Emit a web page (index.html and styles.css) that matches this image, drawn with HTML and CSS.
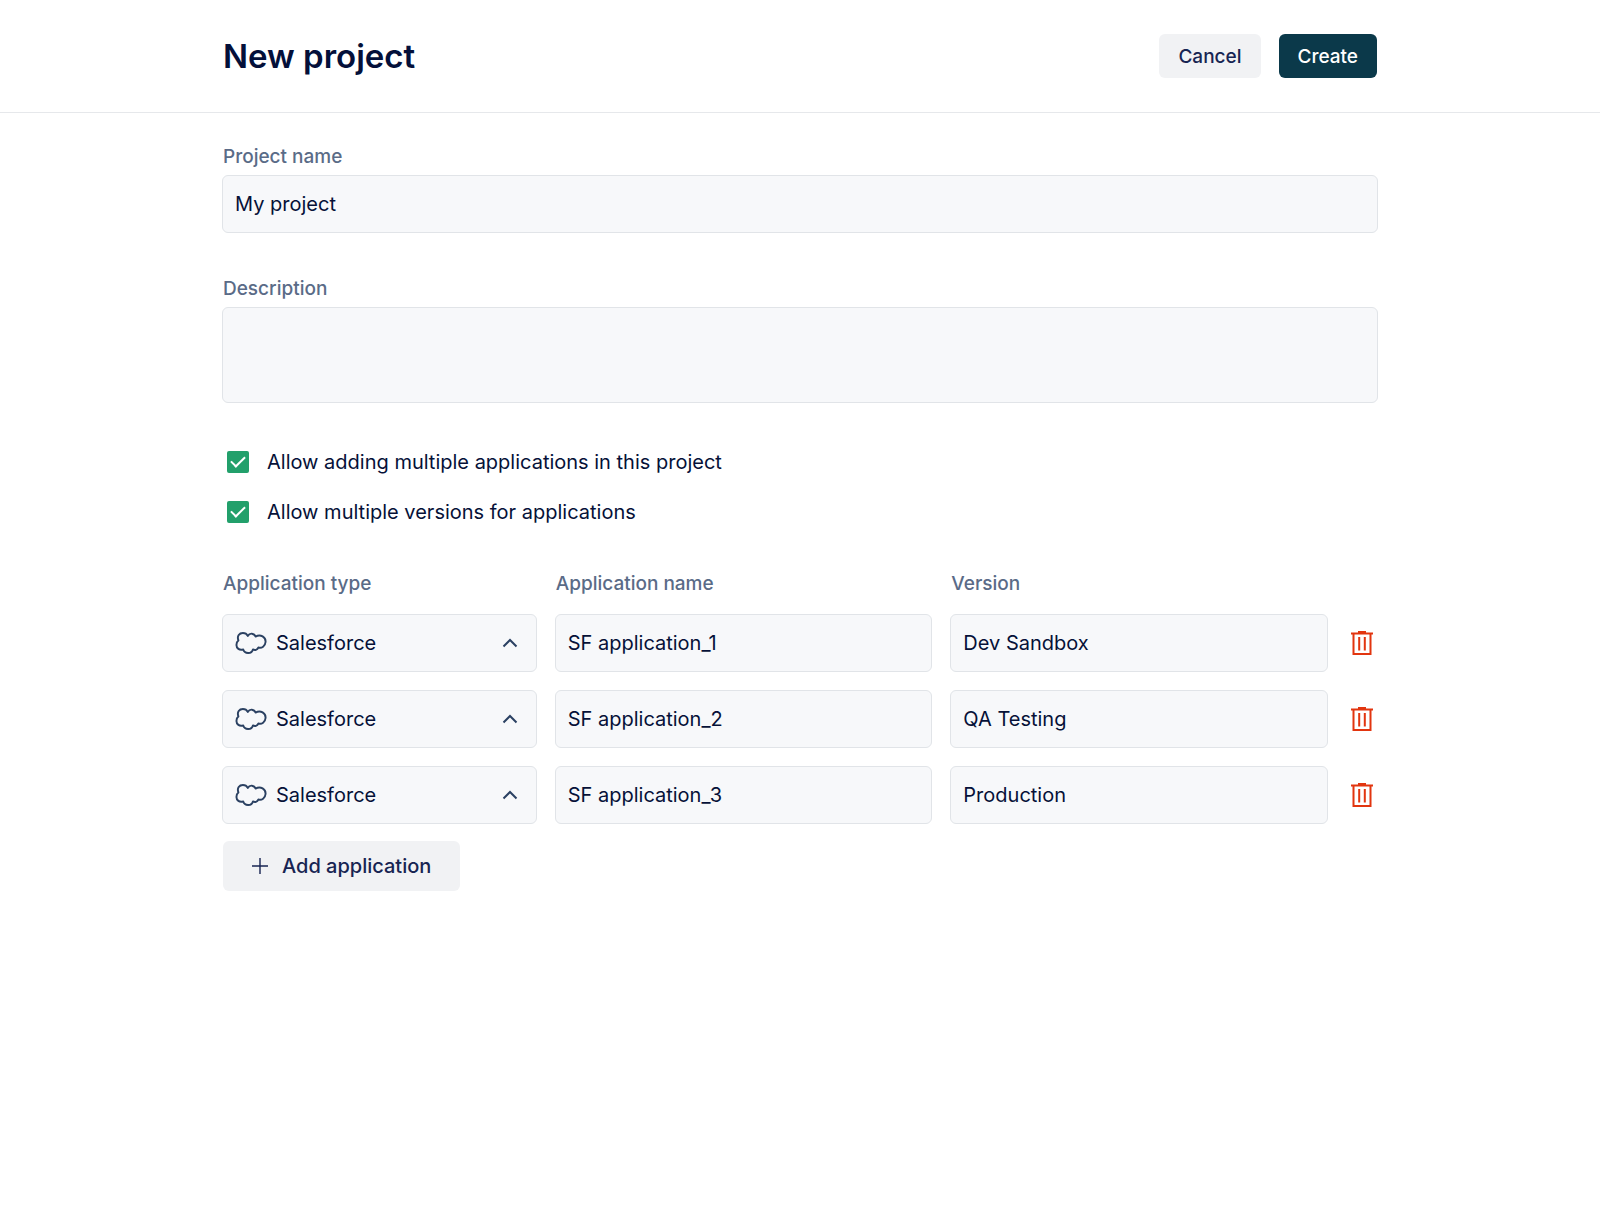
FILE: index.html
```html
<!DOCTYPE html>
<html lang="en">
<head>
    <meta charset="UTF-8">
    <meta name="viewport" content="width=device-width, initial-scale=1.0">
    <title>New project</title>
    <link rel="stylesheet" href="styles.css">
</head>
<body>
    <!-- shared icons -->
    <svg class="sprite" aria-hidden="true">
        <symbol id="icon-cloud" viewBox="0 0 96 68">
            <path d="M9 26 C4 12 12 3 23 3 C30 3 35 6 38 12 C44 2 58 3 62 14 C78 5 94 16 93 31 C92 44 81 51 71 48 C67 56 60 57 54 54 C50 69 28 68 24 54 C12 58 3 50 3 40 C3 34 5 29 9 26 Z" fill="none" stroke="currentColor" stroke-width="6" stroke-linejoin="round"/>
        </symbol>
        <symbol id="icon-up" viewBox="0 0 16 10">
            <path d="M1.5 8.5 L8 2 L14.5 8.5" fill="none" stroke="currentColor" stroke-width="2"/>
        </symbol>
        <symbol id="icon-trash" viewBox="0 0 22 24">
            <path d="M0 2.5 H22 M7 1 H15 M2.5 2.5 V23 H19.5 V2.5 M8.2 6 V19.5 M13.8 6 V19.5" fill="none" stroke="currentColor" stroke-width="2"/>
        </symbol>
    </svg>

    <header class="header">
        <div class="container header-inner">
            <h1>New project</h1>
            <div class="actions">
                <button type="button" class="btn">Cancel</button>
                <button type="submit" form="projectForm" class="btn btn-primary">Create</button>
            </div>
        </div>
    </header>

    <form id="projectForm" class="container">
        <div class="field">
            <label for="projectName">Project name</label>
            <input type="text" id="projectName" value="My project">
        </div>
        <div class="field">
            <label for="description">Description</label>
            <textarea id="description"></textarea>
        </div>

        <div class="checks">
            <label class="check"><input type="checkbox" checked> Allow adding multiple applications in this project</label>
            <label class="check"><input type="checkbox" checked> Allow multiple versions for applications</label>
        </div>

        <div class="apps">
            <div class="row">
                <label for="type1">Application type</label>
                <label for="name1">Application name</label>
                <label for="version1">Version</label>
            </div>
            <div class="row">
                <div class="select">
                    <svg class="cloud"><use href="#icon-cloud"/></svg>
                    <select id="type1"><option>Salesforce</option></select>
                    <svg class="arrow"><use href="#icon-up"/></svg>
                </div>
                <input type="text" id="name1" value="SF application_1">
                <input type="text" id="version1" value="Dev Sandbox">
                <button type="button" class="delete" aria-label="Delete"><svg><use href="#icon-trash"/></svg></button>
            </div>
            <div class="row">
                <div class="select">
                    <svg class="cloud"><use href="#icon-cloud"/></svg>
                    <select aria-label="Application type"><option>Salesforce</option></select>
                    <svg class="arrow"><use href="#icon-up"/></svg>
                </div>
                <input type="text" aria-label="Application name" value="SF application_2">
                <input type="text" aria-label="Version" value="QA Testing">
                <button type="button" class="delete" aria-label="Delete"><svg><use href="#icon-trash"/></svg></button>
            </div>
            <div class="row">
                <div class="select">
                    <svg class="cloud"><use href="#icon-cloud"/></svg>
                    <select aria-label="Application type"><option>Salesforce</option></select>
                    <svg class="arrow"><use href="#icon-up"/></svg>
                </div>
                <input type="text" aria-label="Application name" value="SF application_3">
                <input type="text" aria-label="Version" value="Production">
                <button type="button" class="delete" aria-label="Delete"><svg><use href="#icon-trash"/></svg></button>
            </div>
        </div>

        <button type="button" class="btn btn-add">
            <svg viewBox="0 0 16 16"><path d="M8 0 V16 M0 8 H16" stroke="currentColor" stroke-width="1.4"/></svg>
            Add application
        </button>
    </form>
</body>
</html>
```
FILE: styles.css
```css
* {
    box-sizing: border-box;
}
body {
    margin: 0;
    background: #fff;
    color: #061138;
    font-family: Inter, "Liberation Sans", sans-serif;
    font-size: 20px;
    line-height: 24px;
}
.sprite {
    display: none;
}
.container {
    width: calc(100% - 40px);
    max-width: 1156px;
    margin: 0 auto;
}
.header {
    border-bottom: 1px solid #e6e8eb;
}
.header-inner {
    display: flex;
    align-items: center;
    justify-content: space-between;
    padding: 34px 1px;
}
h1 {
    margin: 0;
    font-size: 33px;
    line-height: 44px;
    font-weight: 600;
    color: #04103a;
}
.actions {
    display: flex;
    gap: 18px;
}
.btn {
    height: 44px;
    padding: 0 19px;
    border: none;
    border-radius: 6px;
    background: #f1f2f4;
    color: #172452;
    font-family: inherit;
    font-size: 19px;
    font-weight: 500;
    cursor: pointer;
}
.btn-primary {
    background: #0b394a;
    color: #fff;
}
label {
    padding-left: 1px;
    color: #5a6b87;
    font-size: 19px;
    font-weight: 500;
}
.field {
    display: flex;
    flex-direction: column;
    gap: 6px;
    padding-top: 32px;
}
.field + .field {
    padding-top: 44px;
}
input[type="text"], textarea, select {
    display: block;
    width: 100%;
    height: 58px;
    padding: 0 12px;
    border: 1px solid #e1e4e8;
    border-radius: 6px;
    background: #f7f8fa;
    color: #061138;
    font-family: inherit;
    font-size: 20px;
}
textarea {
    height: 96px;
    padding: 12px;
    resize: none;
}
.checks {
    display: flex;
    flex-direction: column;
    gap: 26px;
    padding-top: 47px;
}
.check {
    display: flex;
    align-items: center;
    gap: 18px;
    padding-left: 5px;
    color: #061138;
    font-size: 20px;
    font-weight: 400;
}
.check input {
    appearance: none;
    display: grid;
    place-items: center;
    width: 22px;
    height: 22px;
    margin: 0;
    border-radius: 2px;
    background: #22a06b;
}
/* tick mark */
.check input:checked::before {
    content: "";
    width: 12px;
    height: 6px;
    margin-bottom: 4px;
    border-left: 2px solid #fff;
    border-bottom: 2px solid #fff;
    transform: rotate(-45deg);
}
.apps {
    display: flex;
    flex-direction: column;
    gap: 18px;
    padding-top: 48px;
}
.row {
    display: grid;
    grid-template-columns: 5fr 6fr 6fr 32px;
    gap: 18px;
    align-items: center;
}
.select {
    position: relative;
}
.select select {
    appearance: none;
    padding-left: 53px;
}
.select svg {
    position: absolute;
    top: 0;
    bottom: 0;
    margin: auto 0;
    color: #2b4162;
    pointer-events: none;
}
.cloud {
    left: 13px;
    width: 32px;
    height: 22px;
}
.arrow {
    right: 19px;
    width: 16px;
    height: 10px;
}
.delete {
    display: flex;
    justify-content: center;
    padding: 0;
    border: none;
    background: none;
    color: #e2350f;
    cursor: pointer;
}
.delete svg {
    width: 22px;
    height: 24px;
}
.btn-add {
    display: flex;
    align-items: center;
    gap: 14px;
    height: 50px;
    margin: 17px 1px;
    padding: 0 29px;
    font-size: 20px;
}
.btn-add svg {
    width: 16px;
    height: 16px;
}
@media (max-width: 700px) {
    .row {
        grid-template-columns: 1fr 1fr 1fr 32px;
        gap: 8px;
    }
}
```
